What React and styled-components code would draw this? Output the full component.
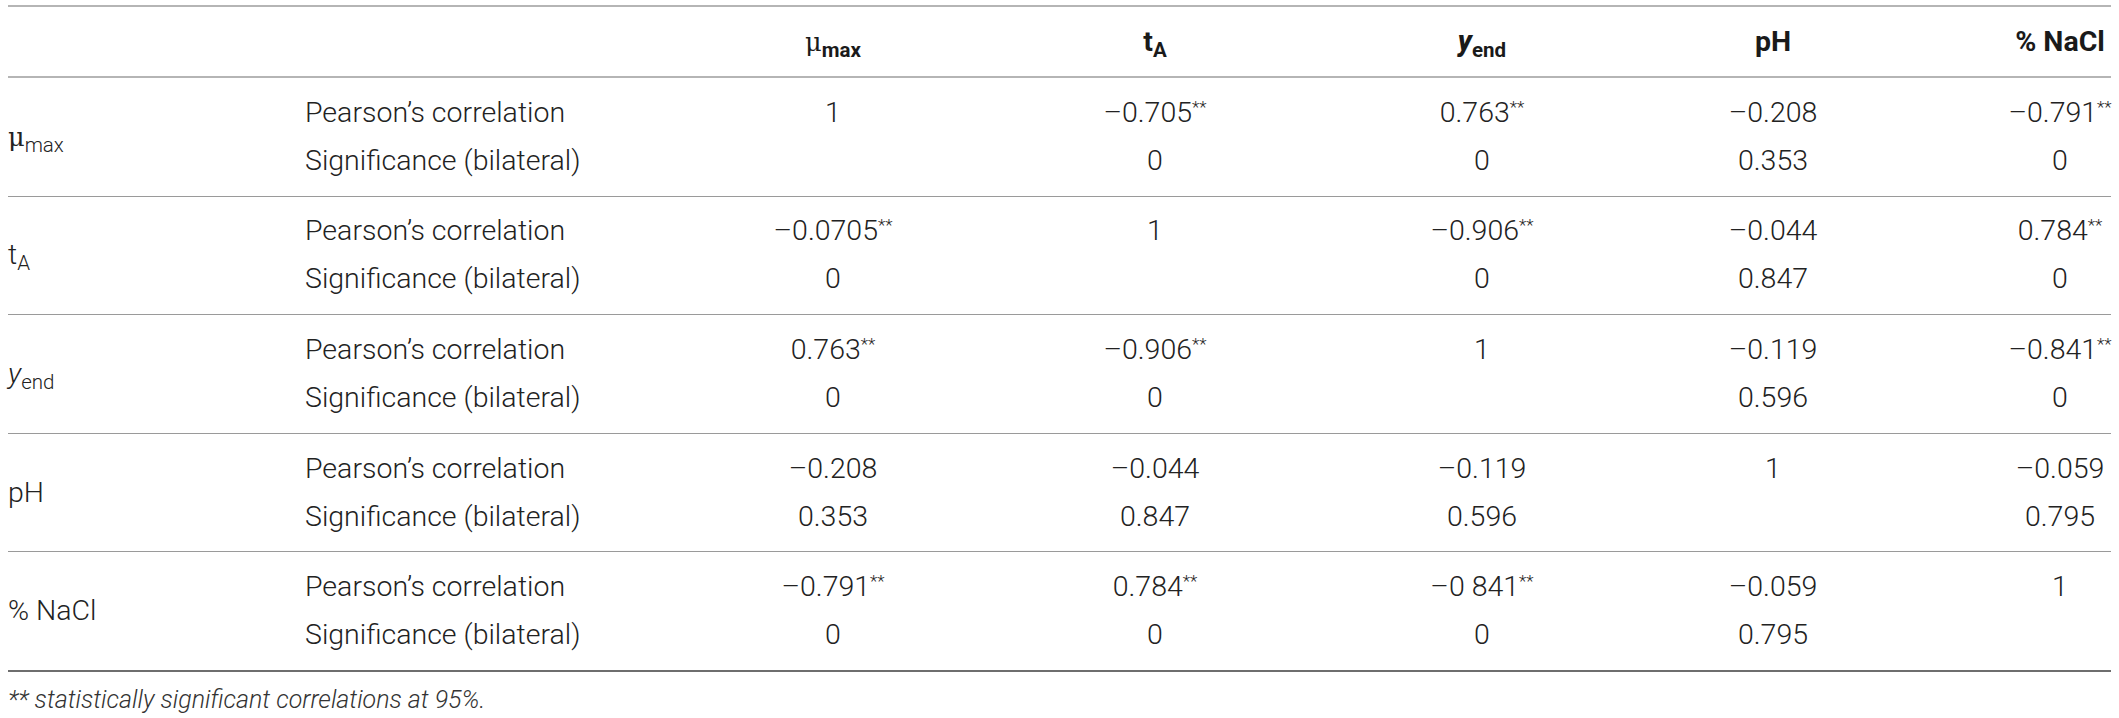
import React from "react";
import styled, { createGlobalStyle } from "styled-components";

const Global = createGlobalStyle`
    body {
        margin: 0;
        background: #fff;
        color: #222;
        font-family: Roboto, "Liberation Sans", sans-serif;
        font-weight: 300;
    }
`;

const COLS = "297px 478px 100px 544px 110px 472px 102px";

const Page = styled.div`
    padding: 5px 8px 0 8px;
`;

const Table = styled.div`
    border-top: 2px solid #b5b5b5;
`;

const HeadRow = styled.div`
    display: grid;
    grid-template-columns: ${COLS};
    height: 69px;
    align-items: center;
    border-bottom: 2px solid #b5b5b5;
    font-weight: 700;
    font-size: 28.5px;
    color: #1a1a1a;
`;

const Row = styled.div`
    display: grid;
    grid-template-columns: ${COLS};
    padding: 10.8px 0;
    border-bottom: ${(p) => (p.$last ? "2px solid #6e6e6e" : "1px solid #9a9a9a")};
    font-size: 28.5px;
    line-height: 48px;
`;

const Label = styled.div`
    display: flex;
    align-items: center;
    white-space: nowrap;
`;

const Stack = styled.div`
    display: flex;
    flex-direction: column;
    white-space: nowrap;
`;

const Line = styled.div`
    height: 48px;
    display: flex;
    justify-content: ${(p) => (p.$left ? "flex-start" : "center")};
    white-space: nowrap;
`;

const HeadCell = styled.div`
    display: flex;
    justify-content: center;
    white-space: nowrap;
`;

const Sub = styled.sub`
    font-size: 0.72em;
    vertical-align: -0.28em;
    line-height: 0;
`;

const Sup = styled.sup`
    font-size: 0.6em;
    vertical-align: 0.55em;
    line-height: 0;
`;

const Mu = styled.span`
    font-family: "DejaVu Serif", serif;
    font-weight: 400;
    font-size: 0.9em;
`;

const ItalicY = styled.i`
    font-style: italic;
    font-weight: ${(p) => (p.$bold ? 800 : 300)};
`;

const Note = styled.p`
    margin: 13px 0 0 0;
    font-style: italic;
    font-size: 25px;
    color: #333;
`;

const MuMax = ({ bold }) => (
    <span>
        <Mu>μ</Mu>
        <Sub style={bold ? { fontWeight: 700 } : undefined}>max</Sub>
    </span>
);

const TA = () => (
    <span>
        t<Sub>A</Sub>
    </span>
);

const YEnd = ({ bold }) => (
    <span>
        <ItalicY $bold={bold}>y</ItalicY>
        <Sub>end</Sub>
    </span>
);

const Value = ({ v }) => {
    if (!v) return null;
    if (v.endsWith("**")) {
        return (
            <span>
                {v.slice(0, -2)}
                <Sup>**</Sup>
            </span>
        );
    }
    return <span>{v}</span>;
};

const rows = [
    {
        label: <MuMax />,
        cells: [["1", ""], ["–0.705**", "0"], ["0.763**", "0"], ["–0.208", "0.353"], ["–0.791**", "0"]],
    },
    {
        label: <TA />,
        cells: [["–0.0705**", "0"], ["1", ""], ["–0.906**", "0"], ["–0.044", "0.847"], ["0.784**", "0"]],
    },
    {
        label: <YEnd />,
        cells: [["0.763**", "0"], ["–0.906**", "0"], ["1", ""], ["–0.119", "0.596"], ["–0.841**", "0"]],
    },
    {
        label: "pH",
        cells: [["–0.208", "0.353"], ["–0.044", "0.847"], ["–0.119", "0.596"], ["1", ""], ["–0.059", "0.795"]],
    },
    {
        label: "% NaCl",
        cells: [["–0.791**", "0"], ["0.784**", "0"], ["–0 841**", "0"], ["–0.059", "0.795"], ["1", ""]],
    },
];

export default function App() {
    return (
        <Page>
            <Global />
            <Table>
                <HeadRow>
                    <div />
                    <div />
                    <HeadCell>
                        <MuMax bold />
                    </HeadCell>
                    <HeadCell>
                        <TA />
                    </HeadCell>
                    <HeadCell>
                        <YEnd bold />
                    </HeadCell>
                    <HeadCell>pH</HeadCell>
                    <HeadCell>% NaCl</HeadCell>
                </HeadRow>
                {rows.map((r, i) => (
                    <Row key={i} $last={i === rows.length - 1}>
                        <Label>{r.label}</Label>
                        <Stack>
                            <Line $left>Pearson’s correlation</Line>
                            <Line $left>Significance (bilateral)</Line>
                        </Stack>
                        {r.cells.map((c, j) => (
                            <Stack key={j}>
                                <Line>
                                    <Value v={c[0]} />
                                </Line>
                                <Line>
                                    <Value v={c[1]} />
                                </Line>
                            </Stack>
                        ))}
                    </Row>
                ))}
            </Table>
            <Note>** statistically significant correlations at 95%.</Note>
        </Page>
    );
}
